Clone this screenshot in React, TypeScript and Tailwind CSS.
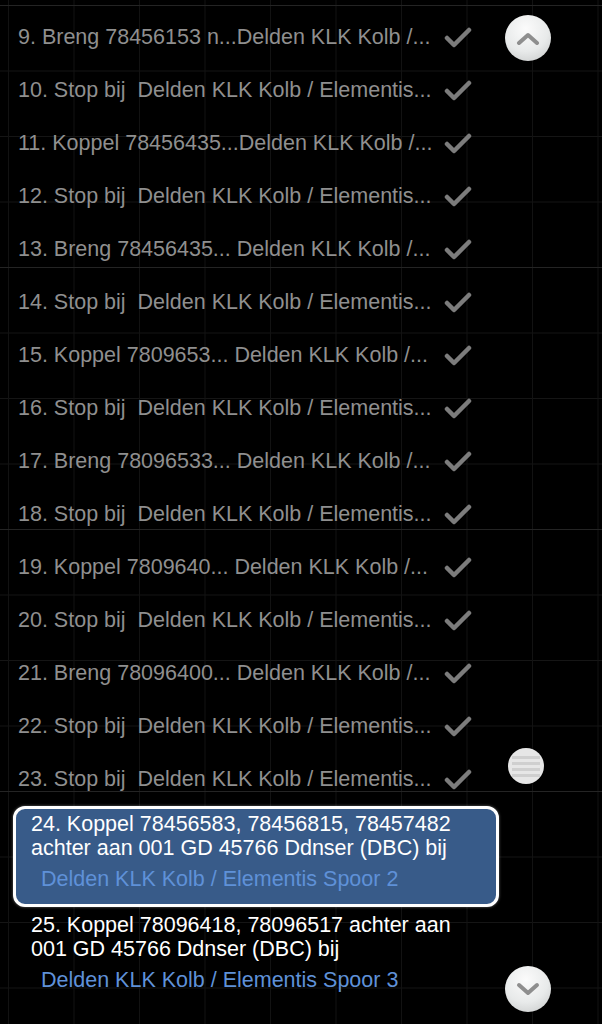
import React from 'react';

type Stop = { no: number; text: string };

const ROWS: Stop[] = [
  { no: 9, text: '9. Breng 78456153 n...Delden KLK Kolb /...' },
  { no: 10, text: '10. Stop bij  Delden KLK Kolb / Elementis...' },
  { no: 11, text: '11. Koppel 78456435...Delden KLK Kolb /...' },
  { no: 12, text: '12. Stop bij  Delden KLK Kolb / Elementis...' },
  { no: 13, text: '13. Breng 78456435... Delden KLK Kolb /...' },
  { no: 14, text: '14. Stop bij  Delden KLK Kolb / Elementis...' },
  { no: 15, text: '15. Koppel 7809653... Delden KLK Kolb /...' },
  { no: 16, text: '16. Stop bij  Delden KLK Kolb / Elementis...' },
  { no: 17, text: '17. Breng 78096533... Delden KLK Kolb /...' },
  { no: 18, text: '18. Stop bij  Delden KLK Kolb / Elementis...' },
  { no: 19, text: '19. Koppel 7809640... Delden KLK Kolb /...' },
  { no: 20, text: '20. Stop bij  Delden KLK Kolb / Elementis...' },
  { no: 21, text: '21. Breng 78096400... Delden KLK Kolb /...' },
  { no: 22, text: '22. Stop bij  Delden KLK Kolb / Elementis...' },
  { no: 23, text: '23. Stop bij  Delden KLK Kolb / Elementis...' },
];

function Check() {
  return (
    <svg width="28" height="22" viewBox="0 0 28 22" className="shrink-0">
      <polyline
        points="3,11 10,18 25,3"
        fill="none"
        stroke="#7c7c7c"
        strokeWidth="4.5"
        strokeLinecap="round"
        strokeLinejoin="round"
      />
    </svg>
  );
}

function RoundButton({ dir }: { dir: 'up' | 'down' }) {
  return (
    <div className="w-[46px] h-[46px] rounded-full bg-[radial-gradient(circle_at_45%_30%,#fbfbfb_0%,#e8eaea_55%,#c4c6c6_100%)] shadow-[0_1px_3px_rgba(0,0,0,0.6)] flex items-center justify-center">
      <svg width="24" height="14" viewBox="0 0 24 14">
        <polyline
          points={dir === 'up' ? '3,12 12,4 21,12' : '3,3 12,11 21,3'}
          fill="none"
          stroke="#8e8e8e"
          strokeWidth="4"
          strokeLinecap="round"
          strokeLinejoin="round"
        />
      </svg>
    </div>
  );
}

function Thumb() {
  return (
    <div className="w-[36px] h-[36px] rounded-full overflow-hidden bg-[#e6e6e6] shadow-[0_1px_2px_rgba(0,0,0,0.5)] flex flex-col justify-center gap-[3px] px-[4px]">
      <div className="h-[3px] bg-[#cfcfcf]" />
      <div className="h-[3px] bg-[#cfcfcf]" />
      <div className="h-[3px] bg-[#cfcfcf]" />
      <div className="h-[3px] bg-[#cfcfcf]" />
    </div>
  );
}

function ExpandedItem({ lines, place, selected }: { lines: string[]; place: string; selected?: boolean }) {
  return (
    <div
      className={`ml-[13px] w-[486px] rounded-[12px] border-[3px] pl-[15px] pt-[3px] pb-[13px] ${
        selected ? 'border-white bg-[#385b89] shadow-[0_0_3px_rgba(255,255,255,0.4)]' : 'border-transparent'
      }`}
    >
      {lines.map((l) => (
        <div key={l} className="leading-[24px] text-white whitespace-nowrap">
          {l}
        </div>
      ))}
      <div className="mt-[7px] pl-[10px] leading-[24px] text-[#5f91d8] whitespace-nowrap">{place}</div>
    </div>
  );
}

export default function App() {
  return (
    <div
      className="h-[1024px] w-[602px] overflow-hidden bg-black flex text-[21.5px] font-['Liberation_Sans',Arial,sans-serif] [background-image:linear-gradient(to_bottom,#242424_1px,transparent_1px),linear-gradient(to_right,#121212_1px,transparent_1px),linear-gradient(to_bottom,#151515_1px,transparent_1px)] [background-size:100%_262px,65.5px_65.5px,65.5px_65.5px] [background-position:0_5px,8px_5px,8px_5px]"
    >
      {/* list */}
      <div className="w-[505px] shrink-0 pt-[11px]">
        {ROWS.map((r) => (
          <div key={r.no} className="h-[53px] flex items-center pl-[18px]">
            <span className="w-[426px] whitespace-pre overflow-hidden text-[#8f8f8f]">{r.text}</span>
            <Check />
          </div>
        ))}

        <ExpandedItem
          selected
          lines={['24. Koppel 78456583, 78456815, 78457482', 'achter aan 001 GD 45766 Ddnser (DBC) bij']}
          place="Delden KLK Kolb / Elementis Spoor 2"
        />
        <ExpandedItem
          lines={['25. Koppel 78096418, 78096517 achter aan', '001 GD 45766 Ddnser (DBC) bij']}
          place="Delden KLK Kolb / Elementis Spoor 3"
        />
      </div>

      {/* scroll controls */}
      <div className="flex flex-col pt-[15px]">
        <RoundButton dir="up" />
        <div className="mt-[687px] ml-[3px]">
          <Thumb />
        </div>
        <div className="mt-[182px]">
          <RoundButton dir="down" />
        </div>
      </div>
    </div>
  );
}
